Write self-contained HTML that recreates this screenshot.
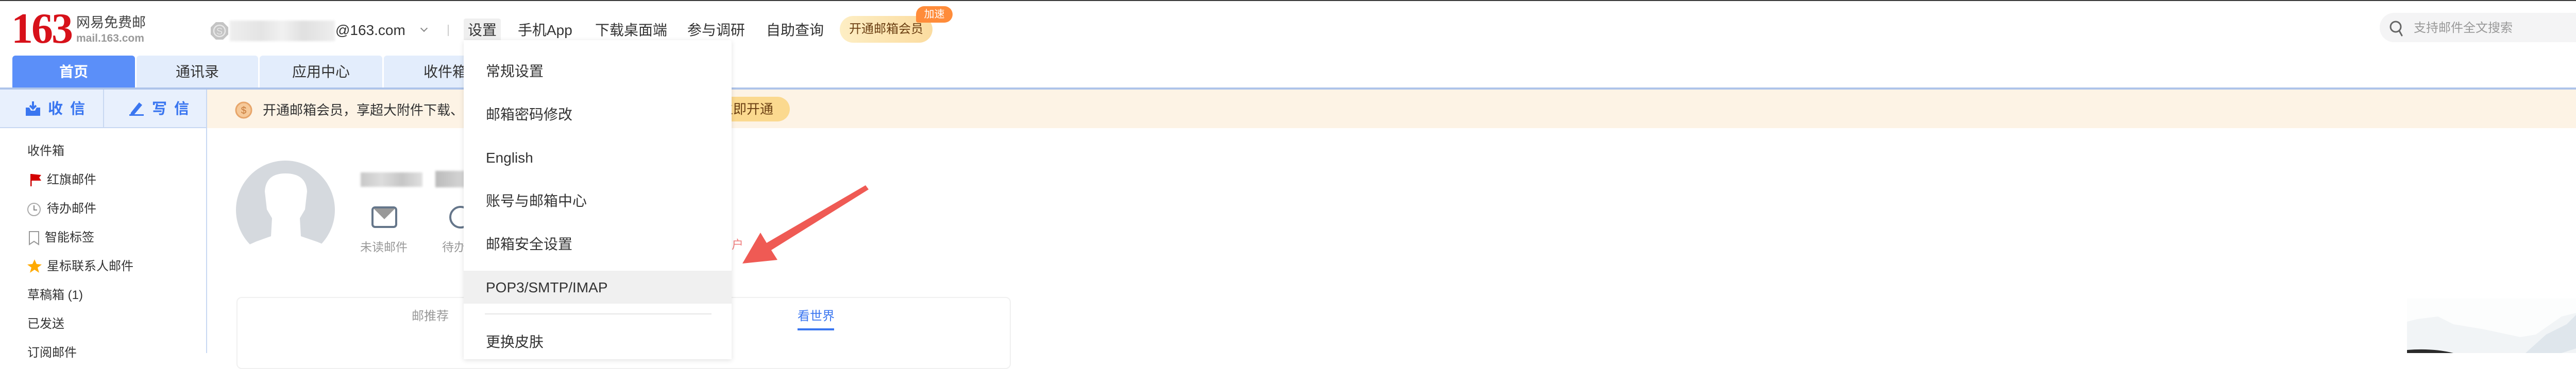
<!DOCTYPE html>
<html><head><meta charset="utf-8">
<style>
*{margin:0;padding:0;box-sizing:border-box}
body{width:5120px;height:686px;overflow:hidden;background:#fff;position:relative;font-family:"Liberation Sans","Noto Sans CJK SC",sans-serif;color:#333}
.a{position:absolute;white-space:nowrap}
.nav{font-size:28px;color:#333;top:40px;line-height:38px}
.tab{position:absolute;top:108px;height:63px;background:#e3edfc;border-radius:6px 6px 0 0;font-size:28px;line-height:63px;text-align:center;color:#333}
.side{font-size:24px;color:#333;line-height:30px}
.mi{position:absolute;left:943px;font-size:28px;color:#333;line-height:36px}
</style></head><body>
<div class="a" style="left:0;top:0;width:5120px;height:2px;background:#3c3c3c"></div>

<div class="a" style="left:22px;top:18px;font-family:'Liberation Serif',serif;font-weight:bold;font-size:84px;line-height:76px;color:#d7111a;letter-spacing:-3px">163</div>
<div class="a" style="left:148px;top:29px;font-size:27px;line-height:30px;color:#444">网易免费邮</div>
<div class="a" style="left:148px;top:64px;font-size:21px;line-height:22px;color:#999;font-weight:bold">mail.163.com</div>

<svg class="a" style="left:408px;top:42px" width="36" height="36" viewBox="0 0 36 36"><polygon points="11,1 25,1 35,11 35,25 25,35 11,35 1,25 1,11" fill="#c4c4c4"/><circle cx="18" cy="18" r="11" fill="none" stroke="#e8e8e8" stroke-width="2.5"/><text x="18" y="25" font-size="18" text-anchor="middle" fill="#e8e8e8" font-family="Liberation Sans">S</text></svg>
<div class="a" style="left:446px;top:40px;width:204px;height:40px;background:linear-gradient(90deg,#eee,#e4e4e4 30%,#f1f1f1 50%,#e0e0e0 70%,#eee);filter:blur(2px)"></div>
<div class="a nav" style="left:651px">@163.com</div>
<div class="a" style="left:818px;top:50px;width:10px;height:10px;border-right:2px solid #888;border-bottom:2px solid #888;transform:rotate(45deg)"></div>
<div class="a" style="left:869px;top:48px;width:2px;height:22px;background:#ccc"></div>
<div class="a" style="left:900px;top:36px;width:72px;height:42px;background:#efefef;border-radius:4px 4px 0 0"></div>
<div class="a nav" style="left:908px">设置</div>
<div class="a nav" style="left:1005px">手机App</div>
<div class="a nav" style="left:1155px">下载桌面端</div>
<div class="a nav" style="left:1334px">参与调研</div>
<div class="a nav" style="left:1487px">自助查询</div>
<div class="a" style="left:1630px;top:31px;width:180px;height:52px;border-radius:26px;background:linear-gradient(90deg,#fdeec4,#fbdca0);font-size:24px;line-height:52px;color:#6b3f12;text-align:center">开通邮箱会员</div>
<div class="a" style="left:1778px;top:12px;width:71px;height:32px;border-radius:16px 16px 16px 4px;background:#ff8c3a;color:#fff;font-size:20px;line-height:32px;text-align:center">加速</div>

<div class="a" style="left:4619px;top:25px;width:476px;height:57px;border-radius:28px;background:#f4f4f5"></div>
<svg class="a" style="left:4637px;top:38px" width="30" height="34" viewBox="0 0 30 34"><circle cx="13" cy="14" r="10" fill="none" stroke="#666" stroke-width="3"/><path d="M20 22 L25 31" stroke="#666" stroke-width="3" stroke-linecap="round"/></svg>
<div class="a" style="left:4685px;top:40px;font-size:24px;line-height:30px;color:#999">支持邮件全文搜索</div>

<div class="tab" style="left:24px;width:238px;background:#5b8ff9;color:#fff;font-weight:bold">首页</div>
<div class="tab" style="left:265px;width:236px">通讯录</div>
<div class="tab" style="left:504px;width:238px">应用中心</div>
<div class="tab" style="left:745px;width:238px">收件箱</div>
<div class="a" style="left:0;top:170px;width:5120px;height:4px;background:#aec4ea"></div>

<div class="a" style="left:0;top:174px;width:402px;height:75px;background:#e8f0fd;border-bottom:2px solid #c8d8f2;border-right:2px solid #c8d8f2"></div>
<div class="a" style="left:200px;top:174px;width:2px;height:74px;background:#c8d8f2"></div>
<svg class="a" style="left:48px;top:195px" width="32" height="32" viewBox="0 0 32 32"><path d="M2 14 L9 14 L12 20 L20 20 L23 14 L30 14 L30 30 L2 30 Z" fill="#3a76f0"/><path d="M16 2 L16 16 M10 10 L16 16 L22 10" stroke="#3a76f0" stroke-width="4" fill="none"/></svg>
<div class="a" style="left:93px;top:194px;font-size:29px;font-weight:bold;color:#3a76f0;letter-spacing:14px;line-height:36px">收信</div>
<svg class="a" style="left:250px;top:195px" width="30" height="32" viewBox="0 0 30 32"><path d="M4 24 L20 4 L26 9 L10 28 L3 29 Z" fill="#3a76f0"/><rect x="1" y="27" width="28" height="3" fill="#3a76f0"/></svg>
<div class="a" style="left:295px;top:194px;font-size:29px;font-weight:bold;color:#3a76f0;letter-spacing:14px;line-height:36px">写信</div>
<div class="a" style="left:400px;top:249px;width:2px;height:437px;background:#c8d8f2"></div>

<div class="a side" style="left:53px;top:279px">收件箱</div>
<svg class="a" style="left:58px;top:337px" width="24" height="26" viewBox="0 0 24 26"><rect x="1" y="1" width="2.5" height="24" fill="#c00"/><path d="M3 1 L22 3 L18 8 L22 14 L3 14 Z" fill="#d40000"/></svg>
<div class="a side" style="left:91px;top:335px">红旗邮件</div>
<svg class="a" style="left:52px;top:393px" width="28" height="28" viewBox="0 0 28 28"><circle cx="14" cy="14" r="12" fill="none" stroke="#aaa" stroke-width="2"/><path d="M14 6 V15 H20" stroke="#888" stroke-width="2" fill="none"/></svg>
<div class="a side" style="left:91px;top:391px">待办邮件</div>
<svg class="a" style="left:55px;top:449px" width="22" height="28" viewBox="0 0 22 28"><path d="M2 1 H20 V26 L11 20 L2 26 Z" fill="none" stroke="#999" stroke-width="2"/></svg>
<div class="a side" style="left:87px;top:447px">智能标签</div>
<svg class="a" style="left:52px;top:503px" width="30" height="28" viewBox="0 0 30 28"><polygon points="15,1 19,10 29,11 21,17 24,27 15,21 6,27 9,17 1,11 11,10" fill="#ffaa00"/></svg>
<div class="a side" style="left:91px;top:503px">星标联系人邮件</div>
<div class="a side" style="left:53px;top:559px">草稿箱 (1)</div>
<div class="a side" style="left:53px;top:615px">已发送</div>
<div class="a side" style="left:53px;top:671px">订阅邮件</div>

<div class="a" style="left:402px;top:174px;width:4718px;height:75px;background:#fdf3e5"></div>
<svg class="a" style="left:456px;top:197px" width="34" height="34" viewBox="0 0 34 34"><circle cx="17" cy="17" r="15" fill="#f6c999" stroke="#e7a56a" stroke-width="3"/><text x="17" y="24" font-size="19" text-anchor="middle" fill="#c77a3a" font-family="Liberation Sans">$</text></svg>
<div class="a" style="left:510px;top:198px;font-size:26px;line-height:32px;color:#333">开通邮箱会员，享超大附件下载、邮件撤回等特权</div>
<div class="a" style="left:1385px;top:188px;width:148px;height:48px;border-radius:24px;background:#fbd98f;font-size:26px;line-height:48px;color:#6b3f12;padding-left:12px">立即开通</div>
<div class="a" style="left:5049px;top:198px;font-size:28px;color:#bbb;line-height:30px">×</div>

<svg class="a" style="left:458px;top:312px" width="194" height="170" viewBox="0 0 194 170"><defs><clipPath id="c"><circle cx="96" cy="96" r="96"/></clipPath></defs><g clip-path="url(#c)"><rect width="194" height="194" fill="#d5d9de"/><path d="M58 175 L22 165 L40 157 L68 147 L70 112 L60 95 L56 60 Q58 25 96 25 Q136 25 138 60 L134 95 L124 112 L126 147 L158 158 L175 165 L140 175 Z" fill="#fff"/></g><rect x="0" y="164" width="194" height="10" fill="#fff"/></svg>
<div class="a" style="left:700px;top:335px;width:120px;height:28px;background:linear-gradient(90deg,#c8c8c8,#ddd,#c6c6c6,#e0e0e0);filter:blur(2px)"></div>
<div class="a" style="left:845px;top:332px;width:60px;height:32px;background:linear-gradient(90deg,#bbb,#d8d8d8);filter:blur(2px)"></div>
<svg class="a" style="left:721px;top:401px" width="50" height="42" viewBox="0 0 50 42"><rect x="2" y="2" width="46" height="38" rx="5" fill="#fff" stroke="#65768a" stroke-width="4"/><path d="M4 4 L25 25 L46 4 Z" fill="#999"/></svg>
<div class="a" style="left:699px;top:467px;font-size:23px;color:#999;line-height:26px">未读邮件</div>
<svg class="a" style="left:870px;top:398px" width="30" height="48" viewBox="0 0 30 48"><circle cx="24" cy="24" r="20" fill="none" stroke="#65768a" stroke-width="4"/></svg>
<div class="a" style="left:858px;top:467px;font-size:23px;color:#999;line-height:26px">待办</div>
<div class="a" style="left:1420px;top:462px;font-size:23px;color:#f08080;line-height:26px">户</div>

<div class="a" style="left:459px;top:577px;width:1503px;height:140px;border:2px solid #f0f0f0;border-radius:10px"></div>
<div class="a" style="left:799px;top:601px;font-size:24px;color:#999;line-height:28px">邮推荐</div>
<div class="a" style="left:1548px;top:601px;font-size:24px;color:#3a76f0;line-height:28px">看世界</div>
<div class="a" style="left:1548px;top:638px;width:71px;height:4px;background:#3a76f0"></div>

<svg class="a" style="left:4672px;top:580px" width="400" height="106" viewBox="0 0 400 106"><rect width="400" height="106" fill="#fcfdfd"/><path d="M20 40 L60 35 L90 50 L150 60 L220 75 L250 70 L300 35 L340 25 L380 5 L400 10 L400 106 L0 106 L0 45 Z" fill="#f1f4f6"/><path d="M230 106 L270 70 L310 50 L330 30 L360 15 L385 5 L400 8 L400 75 L350 90 L300 106 Z" fill="#dfe6ec"/><path d="M0 100 Q50 96 90 106 L0 106 Z" fill="#2a2a2a"/></svg>

<div class="a" style="left:900px;top:78px;width:520px;height:620px;background:#fff;box-shadow:0 2px 10px rgba(0,0,0,0.12);border-radius:0 4px 0 0"></div>
<div class="mi" style="top:121px">常规设置</div>
<div class="mi" style="top:205px">邮箱密码修改</div>
<div class="mi" style="top:289px">English</div>
<div class="mi" style="top:373px">账号与邮箱中心</div>
<div class="mi" style="top:457px">邮箱安全设置</div>
<div class="a" style="left:900px;top:526px;width:520px;height:64px;background:#f0f0f0"></div>
<div class="mi" style="top:541px">POP3/SMTP/IMAP</div>
<div class="a" style="left:941px;top:609px;width:440px;height:2px;background:#e6e6e6"></div>
<div class="mi" style="top:647px">更换皮肤</div>

<svg class="a" style="left:0;top:0" width="1800" height="686" viewBox="0 0 1800 686"><polygon points="1680,360 1488,472 1476,452 1441,512 1509,505 1497,486 1686,368" fill="#ef5a54"/></svg>
</body></html>
